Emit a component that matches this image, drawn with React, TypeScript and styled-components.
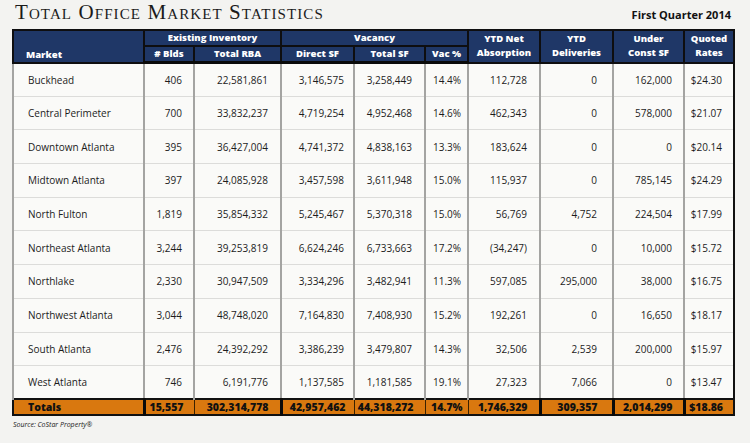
import React from 'react';
import styled, { createGlobalStyle } from 'styled-components';

const Global = createGlobalStyle`
  html, body { margin: 0; padding: 0; background: #f3f3f1; }
  body { font-family: "Open Sans", "Liberation Sans", sans-serif; }
`;

const Page = styled.div`
  width: 750px;
  height: 443px;
  box-sizing: border-box;
  padding: 0 17px 0 12px;
  overflow: hidden;
`;

const TitleBar = styled.div`
  display: flex;
  justify-content: space-between;
  align-items: flex-end;
  height: 29px;
  box-sizing: border-box;
  padding-bottom: 6px;
`;

const Title = styled.h1`
  margin: 0;
  padding-left: 3px;
  font-family: "Liberation Serif", "Times New Roman", serif;
  font-variant: small-caps;
  font-weight: normal;
  font-size: 21px;
  line-height: 1;
  letter-spacing: 1.1px;
  color: #1b1b1b;
`;

const Quarter = styled.div`
  font-weight: 700;
  font-size: 11px;
  line-height: 1;
  color: #111;
  padding: 0 2px 3px 0;
`;

const Table = styled.table`
  width: 721px;
  border-collapse: collapse;
  table-layout: fixed;
  border-left: 2px solid #111;
  border-right: 2px solid #111;
`;

const Col = styled.col<{ $w: number }>`
  width: ${(p) => p.$w}px;
`;

const HeadCell = styled.th<{ $align?: 'left' | 'center' }>`
  background: #1f3767;
  color: #fff;
  font-weight: 800;
  font-size: 9.5px;
  line-height: 14px;
  height: 14px;
  padding: ${(p) => (p.$align === 'left' ? '0 0 0 12px' : '0')};
  text-align: ${(p) => p.$align || 'center'};
  vertical-align: ${(p) => (p.$align === 'left' ? 'bottom' : 'middle')};
  border: 2px solid #0e0e10;
  white-space: nowrap;
`;

const HeadRow = styled.tr`
  &:last-child th {
    border-bottom: 3px solid #0a0a0a;
  }
`;

const BodyRow = styled.tr`
  height: 33.7px;
`;

const Cell = styled.td<{ $align?: 'left' | 'right'; $pad?: number }>`
  background: #fafaf8;
  color: #1c1c1c;
  font-size: 10px;
  padding: ${(p) => (p.$align === 'left' ? '0 0 0 14px' : `0 ${p.$pad ?? 11}px 0 0`)};
  text-align: ${(p) => p.$align || 'right'};
  border-left: 2px solid #a4a4a2;
  border-bottom: 1px solid #dcdcda;
  white-space: nowrap;
`;

const TotalCell = styled.td<{ $align?: 'left' | 'right'; $pad?: number; $heavy?: boolean }>`
  background: #d9780f;
  color: #111;
  font-weight: 800;
  font-size: 10.5px;
  height: 14px;
  line-height: 14px;
  padding: ${(p) => (p.$align === 'left' ? '0 0 0 14px' : `0 ${p.$pad ?? 10}px 0 0`)};
  text-align: ${(p) => p.$align || 'right'};
  border-top: 2px solid #111;
  border-bottom: 2px solid #111;
  border-left: ${(p) => (p.$heavy ? '3px solid #0a0a0a' : '1px solid #3a2200')};
  white-space: nowrap;
`;

const Source = styled.div`
  font-size: 7px;
  font-style: italic;
  color: #222;
  padding: 4px 0 0 1px;
`;

const widths = [131, 50, 87, 73, 71, 43, 72, 73, 71, 50];
const pads = [0, 11, 12, 9, 12, 6, 12, 15, 11, 11];
const heavy = [false, true, false, true, false, false, false, true, true, true];

const rows: string[][] = [
  ['Buckhead', '406', '22,581,861', '3,146,575', '3,258,449', '14.4%', '112,728', '0', '162,000', '$24.30'],
  ['Central Perimeter', '700', '33,832,237', '4,719,254', '4,952,468', '14.6%', '462,343', '0', '578,000', '$21.07'],
  ['Downtown Atlanta', '395', '36,427,004', '4,741,372', '4,838,163', '13.3%', '183,624', '0', '0', '$20.14'],
  ['Midtown Atlanta', '397', '24,085,928', '3,457,598', '3,611,948', '15.0%', '115,937', '0', '785,145', '$24.29'],
  ['North Fulton', '1,819', '35,854,332', '5,245,467', '5,370,318', '15.0%', '56,769', '4,752', '224,504', '$17.99'],
  ['Northeast Atlanta', '3,244', '39,253,819', '6,624,246', '6,733,663', '17.2%', '(34,247)', '0', '10,000', '$15.72'],
  ['Northlake', '2,330', '30,947,509', '3,334,296', '3,482,941', '11.3%', '597,085', '295,000', '38,000', '$16.75'],
  ['Northwest Atlanta', '3,044', '48,748,020', '7,164,830', '7,408,930', '15.2%', '192,261', '0', '16,650', '$18.17'],
  ['South Atlanta', '2,476', '24,392,292', '3,386,239', '3,479,807', '14.3%', '32,506', '2,539', '200,000', '$15.97'],
  ['West Atlanta', '746', '6,191,776', '1,137,585', '1,181,585', '19.1%', '27,323', '7,066', '0', '$13.47'],
];

const totals = ['Totals', '15,557', '302,314,778', '42,957,462', '44,318,272', '14.7%', '1,746,329', '309,357', '2,014,299', '$18.86'];

export default function App() {
  return (
    <Page>
      <Global />
      <TitleBar>
        <Title>Total Office Market Statistics</Title>
        <Quarter>First Quarter 2014</Quarter>
      </TitleBar>
      <Table>
        <colgroup>
          {widths.map((w, i) => (
            <Col key={i} $w={w} />
          ))}
        </colgroup>
        <thead>
          <HeadRow>
            <HeadCell $align="left" rowSpan={2}>Market</HeadCell>
            <HeadCell colSpan={2}>Existing Inventory</HeadCell>
            <HeadCell colSpan={3}>Vacancy</HeadCell>
            <HeadCell rowSpan={2}>YTD Net<br />Absorption</HeadCell>
            <HeadCell rowSpan={2}>YTD<br />Deliveries</HeadCell>
            <HeadCell rowSpan={2}>Under<br />Const SF</HeadCell>
            <HeadCell rowSpan={2}>Quoted<br />Rates</HeadCell>
          </HeadRow>
          <HeadRow>
            <HeadCell># Blds</HeadCell>
            <HeadCell>Total RBA</HeadCell>
            <HeadCell>Direct SF</HeadCell>
            <HeadCell>Total SF</HeadCell>
            <HeadCell>Vac %</HeadCell>
          </HeadRow>
        </thead>
        <tbody>
          {rows.map((r) => (
            <BodyRow key={r[0]}>
              {r.map((v, i) => (
                <Cell key={i} $align={i === 0 ? 'left' : 'right'} $pad={pads[i]}>
                  {v}
                </Cell>
              ))}
            </BodyRow>
          ))}
          <tr>
            {totals.map((v, i) => (
              <TotalCell key={i} $align={i === 0 ? 'left' : 'right'} $pad={pads[i] - 1} $heavy={heavy[i]}>
                {v}
              </TotalCell>
            ))}
          </tr>
        </tbody>
      </Table>
      <Source>Source: CoStar Property®</Source>
    </Page>
  );
}
